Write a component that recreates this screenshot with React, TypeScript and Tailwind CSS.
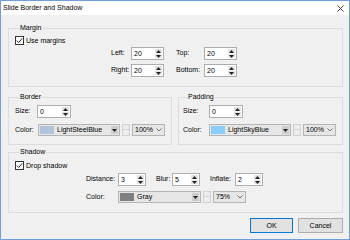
import React from "react";

const Check: React.FC = () => (
  <div className="w-[9px] h-[9px] border border-[#333333] bg-white flex items-center justify-center">
    <svg width="7" height="7" viewBox="0 0 7 7">
      <path d="M0.8 3.6 L2.7 5.5 L6.2 1.4" fill="none" stroke="#222222" strokeWidth="1" />
    </svg>
  </div>
);

const Tri: React.FC<{ up?: boolean }> = ({ up }) => (
  <svg width="5" height="3" viewBox="0 0 5 3">
    <path d={up ? "M0 3 L2.5 0 L5 3Z" : "M0 0 L5 0 L2.5 3Z"} fill="#222222" />
  </svg>
);

const Spin: React.FC<{ value: string; className: string }> = ({ value, className }) => (
  <div className={`flex h-[13px] border border-[#abadb3] bg-white ${className}`}>
    <span className="flex-1 pl-[2px] leading-[11px]">{value}</span>
    <div className="w-[8px] flex flex-col gap-[1px] p-[1px] pl-0">
      <div className="flex-1 flex items-center justify-center bg-[#e3e3e3]">
        <Tri up />
      </div>
      <div className="flex-1 flex items-center justify-center bg-[#e3e3e3]">
        <Tri />
      </div>
    </div>
  </div>
);

const ColorCombo: React.FC<{ swatch: string; name: string; box: string; pct: string }> = ({
  swatch,
  name,
  box,
  pct,
}) => (
  <div className="flex items-center gap-[2px]">
    <div className={`flex h-[12px] border border-[#b4b4b4] bg-[#e6e6e6] ${box}`}>
      <span className={`ml-[1px] my-[1px] w-[14px] ${swatch}`} />
      <span className="flex-1 pl-[3px] leading-[10px]">{name}</span>
      <span className="w-[7px] my-[1px] mr-[1px] bg-[#cccccc] flex items-center justify-center">
        <Tri />
      </span>
    </div>
    <div className="w-[8px] h-[12px] border border-[#d2d2d2] bg-[#ececec] flex items-center justify-center text-[#999999] leading-[10px]">
      ···
    </div>
    <div className="flex items-center h-[12px] w-[33px] border border-[#b4b4b4] bg-[#e6e6e6]">
      <span className="flex-1 pl-[2px] leading-[10px]">{pct}</span>
      <svg width="6" height="4" viewBox="0 0 6 4" className="mr-[2px]">
        <path d="M0.5 0.5 L3 3 L5.5 0.5" fill="none" stroke="#555555" strokeWidth="0.8" />
      </svg>
    </div>
  </div>
);

const Legend: React.FC<{ children: React.ReactNode }> = ({ children }) => (
  <legend className="ml-[4px] px-[1px] leading-[8px]">{children}</legend>
);

export default function App() {
  return (
    <div className="w-[350px] h-[240px] overflow-hidden border border-[#6f9fd8] bg-[#f0f0f0] text-[7px] text-black font-['Liberation_Sans',Arial,sans-serif] flex flex-col">
      <div className="h-[14px] bg-white flex items-center justify-between pl-[2px] pr-[5px]">
        <span className="leading-[8px]">Slide Border and Shadow</span>
        <svg width="7" height="7" viewBox="0 0 7 7">
          <path d="M0.5 0.5 L6.5 6.5 M6.5 0.5 L0.5 6.5" stroke="#333333" strokeWidth="0.9" />
        </svg>
      </div>

      <div className="flex flex-col pl-[7px] pt-[9px]">
        <fieldset className="w-[335px] h-[63px] border border-[#dcdcdc] px-[6px]">
          <Legend>Margin</Legend>
          <div className="mt-[4px] flex items-center gap-[2px] h-[9px]">
            <Check />
            <span className="leading-[8px]">Use margins</span>
          </div>
          <div className="mt-[2px] ml-[96px] grid grid-cols-[20px_33px_12px_28px_33px] gap-y-[4px] items-center">
            <span>Left:</span>
            <Spin value="20" className="w-[33px]" />
            <span />
            <span>Top:</span>
            <Spin value="20" className="w-[33px]" />
            <span>Right:</span>
            <Spin value="20" className="w-[33px]" />
            <span />
            <span>Bottom:</span>
            <Spin value="20" className="w-[33px]" />
          </div>
        </fieldset>

        <div className="mt-[6px] flex gap-[6px]">
          <fieldset className="w-[164px] h-[52px] border border-[#dcdcdc] px-[6px]">
            <Legend>Border</Legend>
            <div className="mt-[4px] flex items-center">
              <span className="w-[22px]">Size:</span>
              <Spin value="0" className="w-[34px]" />
            </div>
            <div className="mt-[6px] flex items-center">
              <span className="w-[23px]">Color:</span>
              <ColorCombo swatch="bg-[#b0c4de]" name="LightSteelBlue" box="w-[82px]" pct="100%" />
            </div>
          </fieldset>

          <fieldset className="w-[165px] h-[52px] border border-[#dcdcdc] px-[4px]">
            <Legend>Padding</Legend>
            <div className="mt-[4px] flex items-center">
              <span className="w-[26px]">Size:</span>
              <Spin value="0" className="w-[34px]" />
            </div>
            <div className="mt-[6px] flex items-center">
              <span className="w-[26px]">Color:</span>
              <ColorCombo swatch="bg-[#87cefa]" name="LightSkyBlue" box="w-[82px]" pct="100%" />
            </div>
          </fieldset>
        </div>

        <fieldset className="mt-[3px] w-[335px] h-[65px] border border-[#dcdcdc] px-[6px]">
          <Legend>Shadow</Legend>
          <div className="mt-[5px] flex items-center gap-[2px] h-[9px]">
            <Check />
            <span className="leading-[8px]">Drop shadow</span>
          </div>
          <div className="mt-[3px] ml-[71px] flex items-center">
            <span className="w-[32px]">Distance:</span>
            <Spin value="3" className="w-[28px]" />
            <span className="ml-[10px] w-[16px]">Blur:</span>
            <Spin value="5" className="w-[28px]" />
            <span className="ml-[10px] w-[25px]">Inflate:</span>
            <Spin value="2" className="w-[28px]" />
          </div>
          <div className="mt-[5px] ml-[71px] flex items-center">
            <span className="w-[32px]">Color:</span>
            <ColorCombo swatch="bg-[#808080]" name="Gray" box="w-[83px]" pct="75%" />
          </div>
        </fieldset>

        <div className="mt-[5px] w-[335px] flex justify-end gap-[5px]">
          <button className="w-[43px] h-[15px] border border-[#0078d7] bg-[#e1e1e1] leading-[13px]">OK</button>
          <button className="w-[45px] h-[15px] border border-[#adadad] bg-[#e1e1e1] leading-[13px]">Cancel</button>
        </div>
      </div>
    </div>
  );
}
